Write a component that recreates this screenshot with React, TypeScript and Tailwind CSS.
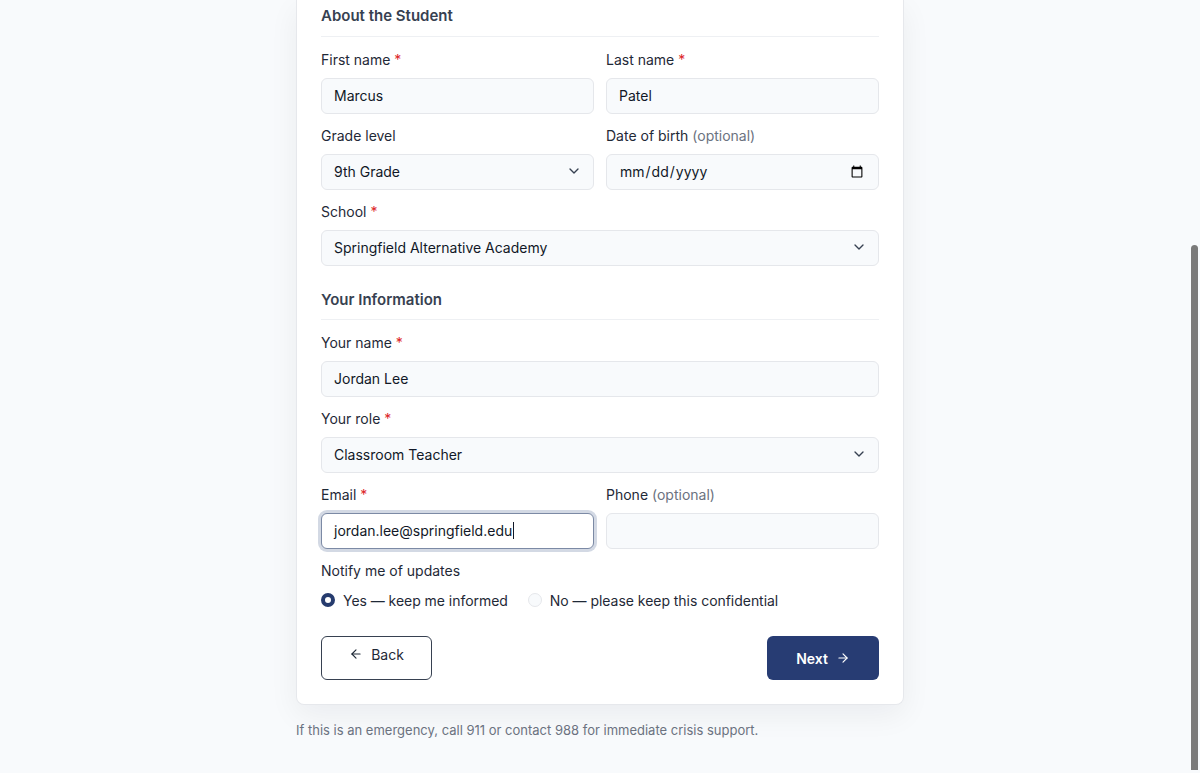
import { ArrowLeft, ArrowRight, ChevronDown } from "lucide-react";

const inputBase =
  "h-9 w-full rounded-md border border-[#e5e7eb] bg-[#f8fafc] px-3 pb-px text-[14px] text-[#111827] outline-none";

function Label({ text, required, optional }: { text: string; required?: boolean; optional?: boolean }) {
  return (
    <div className="mb-2 text-[14px] leading-5 text-[#1f2937]">
      {text}
      {required && <span className="text-[#dc2626]"> *</span>}
      {optional && <span className="text-[#6b7280]"> (optional)</span>}
    </div>
  );
}

function Select({ value }: { value: string }) {
  return (
    <div className="relative">
      <select defaultValue={value} className={`${inputBase} appearance-none pr-9`}>
        <option>{value}</option>
      </select>
      <ChevronDown
        size={16}
        strokeWidth={2}
        className="pointer-events-none absolute right-3 top-[9px] text-[#374151]"
      />
    </div>
  );
}

function SectionTitle({ children, className = "" }: { children: string; className?: string }) {
  return (
    <div
      className={`border-b border-[#eef0f3] text-[15px] font-semibold leading-[22px] text-[#374151] ${className}`}
    >
      {children}
    </div>
  );
}

export default function App() {
  return (
    <div
      className="relative min-h-screen bg-[#f8fafc] text-[#1f2937]"
      style={{ fontFamily: "Inter, 'Noto Sans', sans-serif" }}
    >
      <div className="mx-auto w-[608px]">
        <div className="rounded-b-lg border border-t-0 border-[#e6e8ec] bg-white px-6 pb-6 pt-[5px] shadow-[0_10px_30px_rgba(15,23,42,0.06)]">
          <SectionTitle className="mb-[13px] pb-[9px]">About the Student</SectionTitle>
          <div className="grid grid-cols-2 gap-x-3 gap-y-3">
            <div>
              <Label text="First name" required />
              <input className={inputBase} defaultValue="Marcus" />
            </div>
            <div>
              <Label text="Last name" required />
              <input className={inputBase} defaultValue="Patel" />
            </div>
            <div>
              <Label text="Grade level" />
              <Select value="9th Grade" />
            </div>
            <div>
              <Label text="Date of birth" optional />
              <input type="date" className={inputBase} />
            </div>
            <div className="col-span-2">
              <Label text="School" required />
              <Select value="Springfield Alternative Academy" />
            </div>
          </div>

          <SectionTitle className="mb-[13px] mt-[23px] pb-[8px]">Your Information</SectionTitle>
          <div className="grid grid-cols-2 gap-x-3 gap-y-3">
            <div className="col-span-2">
              <Label text="Your name" required />
              <input className={inputBase} defaultValue="Jordan Lee" />
            </div>
            <div className="col-span-2">
              <Label text="Your role" required />
              <Select value="Classroom Teacher" />
            </div>
            <div>
              <Label text="Email" required />
              <div className="flex h-9 w-full items-center rounded-md border border-[#7c8aa5] bg-white px-3 pb-px text-[14px] text-[#111827] ring-[3px] ring-[#d3d9e4]">
                jordan.lee@springfield.edu
                <span className="ml-px inline-block h-[17px] w-px bg-[#111827]" />
              </div>
            </div>
            <div>
              <Label text="Phone" optional />
              <input className={inputBase} />
            </div>
            <div className="col-span-2">
              <div className="text-[14px] leading-5 text-[#1f2937]">Notify me of updates</div>
              <div className="mt-2 flex h-[22px] items-center gap-5 text-[14px] tracking-[-0.04px] text-[#1f2937]">
                <label className="flex items-center gap-2">
                  <span className="h-[14px] w-[14px] rounded-full border-[4px] border-[#263b6e] bg-white" />
                  Yes — keep me informed
                </label>
                <label className="flex items-center gap-2">
                  <span className="h-[14px] w-[14px] rounded-full border border-[#e5e7eb] bg-[#f8fafc]" />
                  No — please keep this confidential
                </label>
              </div>
            </div>
          </div>

          <div className="mt-[25px] flex items-center justify-between">
            <button
              type="button"
              className="flex h-11 w-[111px] items-center justify-center gap-2 rounded-md border border-[#374151] bg-white pb-2 text-[14px] font-normal text-[#1f2937]"
            >
              <ArrowLeft size={14} strokeWidth={2} />
              Back
            </button>
            <button
              type="button"
              className="flex h-11 w-[112px] items-center justify-center gap-2 rounded-md bg-[#273c73] text-[14px] font-semibold text-white"
            >
              Next
              <ArrowRight size={14} strokeWidth={2} />
            </button>
          </div>
        </div>
        <p className="mt-4 text-[13px] leading-[18px] text-[#6b7280]">
          If this is an emergency, call 911 or contact 988 for immediate crisis support.
        </p>
      </div>

      <div className="absolute left-[1191px] top-[245px] h-[525px] w-[7px] rounded-t-sm bg-[#7a7a7a]" />
    </div>
  );
}
